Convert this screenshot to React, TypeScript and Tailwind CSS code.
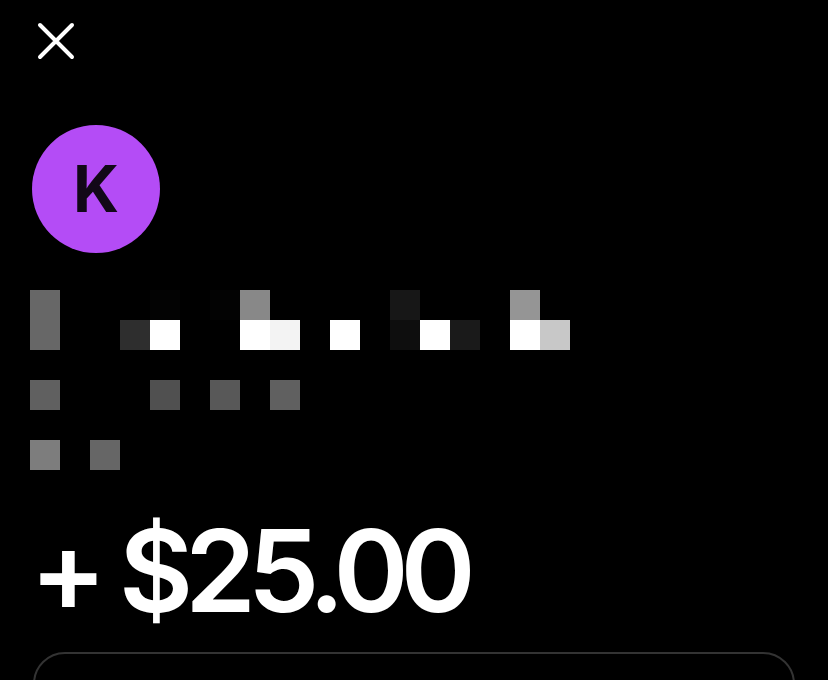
import React from "react";

const cells: string[][] = [
  ["bg-[#676767]", "", "", "", "bg-[#030303]", "", "bg-[#030303]", "bg-[#888888]", "", "", "", "", "bg-[#171717]", "", "", "", "bg-[#959595]", ""],
  ["bg-[#676767]", "", "", "bg-[#2e2e2e]", "bg-white", "", "", "bg-white", "bg-[#f3f3f3]", "", "bg-white", "", "bg-[#0e0e0e]", "bg-white", "bg-[#1a1a1a]", "", "bg-white", "bg-[#c8c8c8]"],
  ["", "", "", "", "", "", "", "", "", "", "", "", "", "", "", "", "", ""],
  ["bg-[#606060]", "", "", "", "bg-[#505050]", "", "bg-[#585858]", "", "bg-[#606060]", "", "", "", "", "", "", "", "", ""],
  ["", "", "", "", "", "", "", "", "", "", "", "", "", "", "", "", "", ""],
  ["bg-[#7d7d7d]", "", "bg-[#666666]", "", "", "", "", "", "", "", "", "", "", "", "", "", "", ""],
];

export default function App() {
  return (
    <div className="w-[828px] h-[680px] bg-black overflow-hidden flex flex-col" style={{ fontFamily: "Inter, 'Liberation Sans', sans-serif" }}>
      <div className="pl-[36px] pt-[21px]">
        <svg width="40" height="40" viewBox="0 0 40 40" fill="none">
          <path d="M4 4 L36 36 M36 4 L4 36" stroke="white" strokeWidth="4" strokeLinecap="round" />
        </svg>
      </div>
      <div className="pl-[32px] mt-[64px]">
        <div className="w-[128px] h-[128px] rounded-full bg-[#b44cf6] flex items-center justify-center">
          <span className="text-[64px] leading-none font-bold text-[#120818]">K</span>
        </div>
      </div>
      <div className="pl-[30px] mt-[37px] grid grid-cols-[repeat(18,30px)] grid-rows-[repeat(6,30px)]">
        {cells.flatMap((row, r) =>
          row.map((c, i) => <div key={r + "-" + i} className={c} />)
        )}
      </div>
      <div className="pl-[30px] mt-[44px] text-white text-[114px] leading-none font-semibold tracking-[-0.072em] whitespace-nowrap">
        + $25.00
      </div>
      <div className="mx-[33px] mt-[24px] h-[200px] shrink-0 rounded-[32px] border-2 border-[#333333]" />
    </div>
  );
}
